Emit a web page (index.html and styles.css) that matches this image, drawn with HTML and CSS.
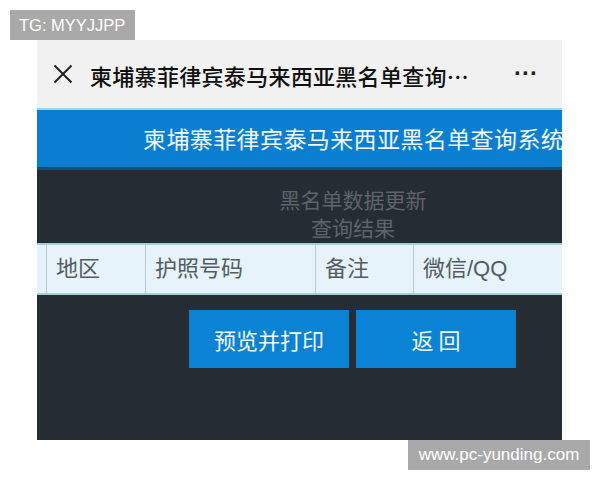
FILE: index.html
```html
<!DOCTYPE html>
<html lang="zh">
<head>
<meta charset="utf-8">
<link rel="stylesheet" href="styles.css">
</head>
<body>
<div class="tag">TG: MYYJJPP</div>
<div class="shot">
  <div class="topbar">
    <svg class="close" width="20" height="20" viewBox="0 0 20 20"><path d="M1.5 1.5 L18.5 18.5 M18.5 1.5 L1.5 18.5" stroke="#222" stroke-width="2" fill="none"/></svg>
    <div class="title">柬埔寨菲律宾泰马来西亚黑名单查询…</div>
    <div class="more">···</div>
  </div>
  <div class="header"><span>柬埔寨菲律宾泰马来西亚黑名单查询系统</span></div>
  <div class="main">
    <div class="notice"><div>黑名单数据更新</div><div>查询结果</div></div>
    <div class="table">
      <div class="cell c0"></div>
      <div class="cell c1">地区</div>
      <div class="cell c2">护照号码</div>
      <div class="cell c3">备注</div>
      <div class="cell c4">微信/QQ</div>
    </div>
    <div class="buttons">
      <div class="btn">预览并打印</div>
      <div class="btn">返 回</div>
    </div>
  </div>
</div>
<div class="footer-row"><div class="site">www.pc-yunding.com</div></div>
</body>
</html>
```
FILE: styles.css
```css
html, body { margin: 0; padding: 0; background: #fff; }
body { width: 600px; height: 480px; overflow: hidden; font-family: "Noto Sans CJK SC", "Liberation Sans", sans-serif; }
.tag {
  margin: 10px 0 0 10px; width: 125px; height: 30px; background: #a9a9a9; color: #fff;
  font-family: "Liberation Sans", sans-serif; font-size: 16.5px; line-height: 30px; box-sizing: border-box; padding-left: 9px;
}
.shot { margin-left: 37px; width: 525px; height: 400px; overflow: hidden; background: #252c33; }
.topbar { height: 68px; background: #f1f1f1; display: flex; align-items: center; border-bottom: 2px solid #9fd4e4; }
.close { margin-left: 16px; margin-right: 17px; }
.title { font-size: 22px; font-weight: 500; color: #111; white-space: nowrap; flex: 1; padding-top: 1px; letter-spacing: 0.3px; }
.more { width: 48px; font-family: "Liberation Sans", sans-serif; font-size: 24px; font-weight: 700; color: #222; padding-bottom: 2px; }
.header {
  height: 57px; background: #0a7fd2; border-bottom: 3px solid #1b4d73; white-space: nowrap; overflow: hidden;
  color: #f2f8ff; font-size: 23px; letter-spacing: 0.4px; line-height: 56px; padding-left: 106px;
}
.main { display: flex; flex-direction: column; }
.notice {
  display: flex; flex-direction: column; align-items: center; gap: 2px;
  color: #5d646b; font-size: 21px; line-height: 26px; padding-top: 16px; padding-left: 107px; height: 57px;
}
.table { display: flex; height: 48px; border-top: 2px solid #a6cfd2; border-bottom: 2px solid #a6cfd2; background: #e7f3fa; }
.cell {
  box-sizing: border-box; border-right: 1.5px solid #b9ccd5; color: #555b5f; font-size: 22px; line-height: 48px;
  padding-left: 9px; white-space: nowrap; font-family: "Liberation Sans", "Noto Sans CJK SC", sans-serif;
}
.c0 { width: 10px; padding: 0; }
.c1 { width: 99px; }
.c2 { width: 170px; }
.c3 { width: 98px; }
.c4 { flex: 1; border-right: none; }
.buttons { display: flex; gap: 7px; margin-top: 15px; margin-left: 152px; }
.btn { width: 160px; height: 58px; background: #0a83d4; color: #f4f9ff; font-size: 22px; line-height: 58px; text-align: center; }
.footer-row { display: flex; justify-content: flex-end; padding-right: 10px; }
.site {
  width: 182px; height: 30px; background: #a9a9a9; color: #fff; font-family: "Liberation Sans", sans-serif;
  font-size: 17px; line-height: 30px; text-align: center;
}
```
